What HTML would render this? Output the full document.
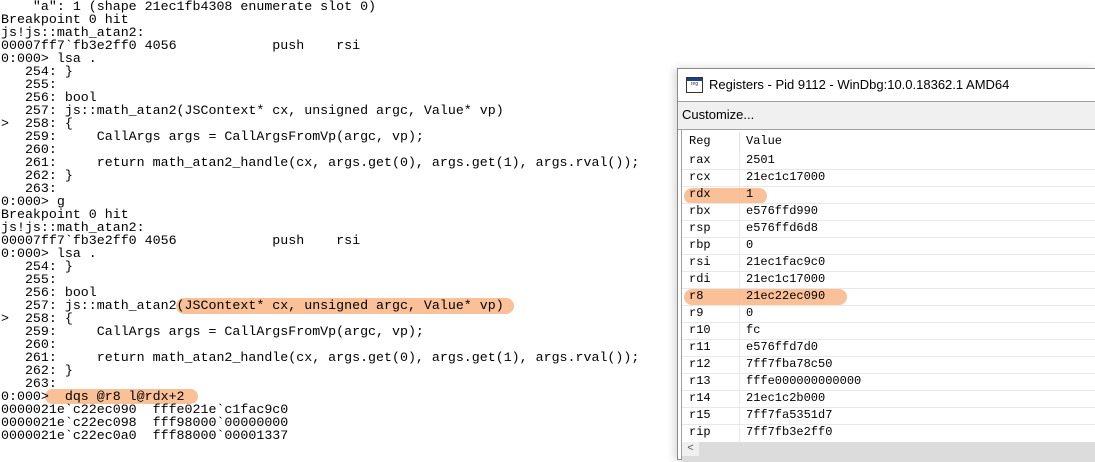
<!DOCTYPE html>
<html><head><style>
body{margin:0;width:1095px;height:455px;background:#fff;overflow:hidden;position:relative;font-family:"Liberation Mono",monospace;}
pre{position:absolute;left:1px;top:0;margin:0;font-family:"Liberation Mono",monospace;font-size:13.3px;line-height:13px;color:#000;}
.hl{position:absolute;background:#f9b98c;border-radius:9px;opacity:.9}
.win{position:absolute;left:677px;top:68px;width:420px;height:390px;border:1px solid #8a8a8a;border-right:none;background:#fff;box-shadow:-3px 0 8px rgba(0,0,0,.15)}
.title{position:absolute;left:0;top:0;right:0;height:32px;font-family:"Liberation Sans",sans-serif;font-size:12.5px;color:#000}
.tb{position:absolute;left:0;top:32px;right:0;height:27px;background:#f0f0f0;border-top:1px solid #a0a0a0;border-bottom:1px solid #a0a0a0;font-family:"Liberation Sans",sans-serif;font-size:12.5px}
.list{position:absolute;left:3px;top:61px;right:0;bottom:0;border-left:1px solid #a0a0a0}
.row{position:absolute;left:0;right:0;height:17px;border-bottom:1px solid #e8e8e8;font-size:12px;line-height:17px}
.row span{position:absolute;left:7px}
.row b{position:absolute;left:64px;font-weight:normal}
</style></head><body>
<div class="hl" style="left:176px;top:298px;width:338px;height:16px"></div>
<div class="hl" style="left:45px;top:389px;width:153px;height:15px"></div>
<pre>    "a": 1 (shape 21ec1fb4308 enumerate slot 0)
Breakpoint 0 hit
js!js::math_atan2:
00007ff7`fb3e2ff0 4056            push    rsi
0:000> lsa .
   254: }
   255:
   256: bool
   257: js::math_atan2(JSContext* cx, unsigned argc, Value* vp)
>  258: {
   259:     CallArgs args = CallArgsFromVp(argc, vp);
   260:
   261:     return math_atan2_handle(cx, args.get(0), args.get(1), args.rval());
   262: }
   263:
0:000> g
Breakpoint 0 hit
js!js::math_atan2:
00007ff7`fb3e2ff0 4056            push    rsi
0:000> lsa .
   254: }
   255:
   256: bool
   257: js::math_atan2(JSContext* cx, unsigned argc, Value* vp)
>  258: {
   259:     CallArgs args = CallArgsFromVp(argc, vp);
   260:
   261:     return math_atan2_handle(cx, args.get(0), args.get(1), args.rval());
   262: }
   263:
0:000>  dqs @r8 l@rdx+2
0000021e`c22ec090  fffe021e`c1fac9c0
0000021e`c22ec098  fff98000`00000000
0000021e`c22ec0a0  fff88000`00001337</pre>
<div class="win">
 <div class="title">
  <div style="position:absolute;left:8px;top:8px;width:15px;height:14px;border:1px solid #333;background:#fff"><div style="height:3px;background:#1c3f8c"></div><div style="font-size:5px;line-height:7px;text-align:center;color:#333">reg</div></div>
  <div style="position:absolute;left:31px;top:8px;font-size:13px">Registers - Pid 9112 - WinDbg:10.0.18362.1 AMD64</div>
 </div>
 <div class="tb"><div style="position:absolute;left:4px;top:5px;font-size:13px">Customize...</div></div>
 <div class="list">
  <div class="row" style="top:0;height:22px;line-height:22px;border-bottom:none"><span>Reg</span><b>Value</b><div style="position:absolute;left:57px;top:2px;width:1px;height:20px;background:#e0e0e0"></div></div>
  <div style="position:absolute;left:57px;top:22px;width:1px;height:290px;background:#e8e8e8"></div>
  <div class="hl" style="left:2px;top:58px;width:83px;height:16px"></div>
  <div class="hl" style="left:2px;top:159px;width:163px;height:16px"></div>
  <div class="row" style="top:22px"><span>rax</span><b>2501</b></div>
  <div class="row" style="top:39px"><span>rcx</span><b>21ec1c17000</b></div>
  <div class="row" style="top:56px"><span>rdx</span><b>1</b></div>
  <div class="row" style="top:73px"><span>rbx</span><b>e576ffd990</b></div>
  <div class="row" style="top:90px"><span>rsp</span><b>e576ffd6d8</b></div>
  <div class="row" style="top:107px"><span>rbp</span><b>0</b></div>
  <div class="row" style="top:124px"><span>rsi</span><b>21ec1fac9c0</b></div>
  <div class="row" style="top:141px"><span>rdi</span><b>21ec1c17000</b></div>
  <div class="row" style="top:158px"><span>r8</span><b>21ec22ec090</b></div>
  <div class="row" style="top:175px"><span>r9</span><b>0</b></div>
  <div class="row" style="top:192px"><span>r10</span><b>fc</b></div>
  <div class="row" style="top:209px"><span>r11</span><b>e576ffd7d0</b></div>
  <div class="row" style="top:226px"><span>r12</span><b>7ff7fba78c50</b></div>
  <div class="row" style="top:243px"><span>r13</span><b>fffe000000000000</b></div>
  <div class="row" style="top:260px"><span>r14</span><b>21ec1c2b000</b></div>
  <div class="row" style="top:277px"><span>r15</span><b>7ff7fa5351d7</b></div>
  <div class="row" style="top:294px;border-bottom:none"><span>rip</span><b>7ff7fb3e2ff0</b></div>
  <div style="position:absolute;left:0;right:0;top:312px;height:20px;background:#dcdcdc"><div style="position:absolute;left:0;top:0;width:17px;height:14px;background:#f0f0f0;font-size:11px;line-height:14px;text-align:center;color:#555">&lt;</div></div>
 </div>
</div>
</body></html>
